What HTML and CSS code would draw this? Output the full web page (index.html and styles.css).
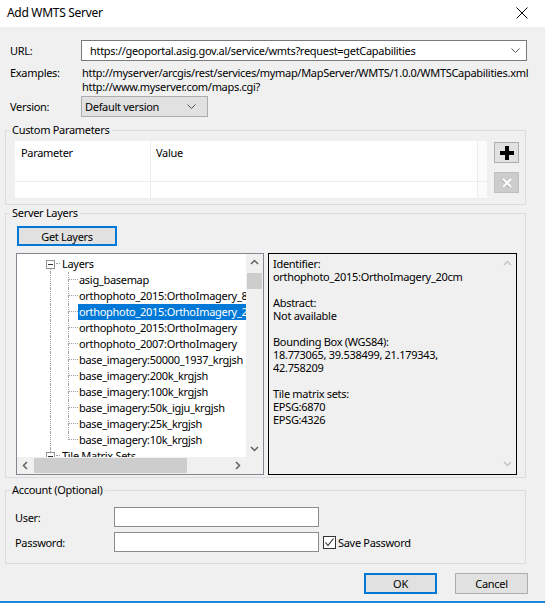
FILE: index.html
```html
<!DOCTYPE html>
<html>
<head>
<meta charset="utf-8">
<title>Add WMTS Server</title>
<link rel="stylesheet" href="styles.css">
</head>
<body>
<div class="window">
  <div class="titlebar">
    <span class="title">Add WMTS Server</span>
    <svg class="close" width="12" height="12" viewBox="0 0 12 12"><path d="M0.5 0.5L11.5 11.5M11.5 0.5L0.5 11.5" stroke="#000" stroke-width="1" fill="none"/></svg>
  </div>
  <div class="main">
    <div class="row url-row">
      <span class="lbl">URL:</span>
      <div class="combo url-combo">
        <span class="combo-text">https://geoportal.asig.gov.al/service/wmts?request=getCapabilities</span>
        <svg class="chev" width="9" height="5" viewBox="0 0 9 5"><path d="M0.5 0.5L4.5 4.5L8.5 0.5" stroke="#555" fill="none"/></svg>
      </div>
    </div>
    <div class="row ex-row">
      <span class="lbl">Examples:</span>
      <div class="examples">
        <div>http://myserver/arcgis/rest/services/mymap/MapServer/WMTS/1.0.0/WMTSCapabilities.xml</div>
        <div>http://www.myserver.com/maps.cgi?</div>
      </div>
    </div>
    <div class="row ver-row">
      <span class="lbl">Version:</span>
      <div class="combo ver-combo">
        <span class="combo-text">Default version</span>
        <svg class="chev" width="9" height="5" viewBox="0 0 9 5"><path d="M0.5 0.5L4.5 4.5L8.5 0.5" stroke="#555" fill="none"/></svg>
      </div>
    </div>

    <fieldset class="group params">
      <legend>Custom Parameters</legend>
      <div class="params-body">
        <div class="grid">
          <div class="gcell hdr c1">Parameter</div>
          <div class="gcell hdr c2">Value</div>
          <div class="gcell hdr c3"></div>
          <div class="gcell c1"></div>
          <div class="gcell c2"></div>
          <div class="gcell c3"></div>
        </div>
        <div class="side-btns">
          <div class="sqbtn add">
            <svg width="14" height="14" viewBox="0 0 14 14"><rect x="5" y="0" width="4" height="14" fill="#000"/><rect x="0" y="5" width="14" height="4" fill="#000"/></svg>
          </div>
          <div class="sqbtn del">
            <svg width="12" height="12" viewBox="0 0 12 12"><path d="M2 3L9 10M9 3L2 10" stroke="#9a9a9a" stroke-width="2.2" fill="none"/><path d="M2 2L10 10M10 2L2 10" stroke="#fff" stroke-width="2" fill="none"/></svg>
          </div>
        </div>
      </div>
    </fieldset>

    <fieldset class="group layers">
      <legend>Server Layers</legend>
      <div class="layers-inner">
        <div class="btn default get-layers">Get Layers</div>
        <div class="layers-body">
          <div class="tree">
            <div class="tree-content">
              <div class="trow">
                <div class="exp"><i class="ln top none"></i><span class="box"><i class="minus"></i></span><i class="ln tail"></i></div>
                <i class="hstub"></i>
                <span class="tlabel">Layers</span>
              </div>
              <div class="trow"><i class="anc"></i><i class="conn"><b></b><b></b></i><span class="tlabel">asig_basemap</span></div>
              <div class="trow"><i class="anc"></i><i class="conn"><b></b><b></b></i><span class="tlabel">orthophoto_2015:OrthoImagery_8cm</span></div>
              <div class="trow sel"><i class="anc"></i><i class="conn"><b></b><b></b></i><span class="tlabel">orthophoto_2015:OrthoImagery_20cm</span></div>
              <div class="trow"><i class="anc"></i><i class="conn"><b></b><b></b></i><span class="tlabel">orthophoto_2015:OrthoImagery</span></div>
              <div class="trow"><i class="anc"></i><i class="conn"><b></b><b></b></i><span class="tlabel">orthophoto_2007:OrthoImagery</span></div>
              <div class="trow"><i class="anc"></i><i class="conn"><b></b><b></b></i><span class="tlabel">base_imagery:50000_1937_krgjsh</span></div>
              <div class="trow"><i class="anc"></i><i class="conn"><b></b><b></b></i><span class="tlabel">base_imagery:200k_krgjsh</span></div>
              <div class="trow"><i class="anc"></i><i class="conn"><b></b><b></b></i><span class="tlabel">base_imagery:100k_krgjsh</span></div>
              <div class="trow"><i class="anc"></i><i class="conn"><b></b><b></b></i><span class="tlabel">base_imagery:50k_igju_krgjsh</span></div>
              <div class="trow"><i class="anc"></i><i class="conn"><b></b><b></b></i><span class="tlabel">base_imagery:25k_krgjsh</span></div>
              <div class="trow last"><i class="anc"></i><i class="conn"><b></b><b></b></i><span class="tlabel">base_imagery:10k_krgjsh</span></div>
              <div class="trow">
                <div class="exp"><i class="ln top"></i><span class="box"><i class="minus"></i></span><i class="ln tail none"></i></div>
                <i class="hstub"></i>
                <span class="tlabel">Tile Matrix Sets</span>
              </div>
            </div>
            <div class="vscroll">
              <svg class="arrow" width="17" height="17" viewBox="0 0 17 17"><path d="M5 10L8.5 6.5L12 10" stroke="#606060" stroke-width="1.5" fill="none"/></svg>
              <div class="vtrack"><div class="vthumb"></div></div>
              <svg class="arrow" width="17" height="17" viewBox="0 0 17 17"><path d="M5 7L8.5 10.5L12 7" stroke="#606060" stroke-width="1.5" fill="none"/></svg>
            </div>
            <div class="hscroll">
              <svg class="arrow" width="17" height="17" viewBox="0 0 17 17"><path d="M10 5L6.5 8.5L10 12" stroke="#606060" stroke-width="1.5" fill="none"/></svg>
              <div class="htrack"><div class="hthumb"></div></div>
              <svg class="arrow" width="17" height="17" viewBox="0 0 17 17"><path d="M7 5L10.5 8.5L7 12" stroke="#606060" stroke-width="1.5" fill="none"/></svg>
            </div>
            <div class="corner"></div>
          </div>
          <div class="details">
            <div class="details-text">
              <div>Identifier:</div>
              <div>orthophoto_2015:OrthoImagery_20cm</div>
              <div class="blank"></div>
              <div>Abstract:</div>
              <div>Not available</div>
              <div class="blank"></div>
              <div>Bounding Box (WGS84):</div>
              <div>18.773065, 39.538499, 21.179343,</div>
              <div>42.758209</div>
              <div class="blank"></div>
              <div>Tile matrix sets:</div>
              <div>EPSG:6870</div>
              <div>EPSG:4326</div>
            </div>
            <div class="dscroll">
              <svg class="arrow" width="17" height="17" viewBox="0 0 17 17"><path d="M5 10L8.5 6.5L12 10" stroke="#c4c4c4" stroke-width="1.5" fill="none"/></svg>
              <svg class="arrow" width="17" height="17" viewBox="0 0 17 17"><path d="M5 7L8.5 10.5L12 7" stroke="#c4c4c4" stroke-width="1.5" fill="none"/></svg>
            </div>
          </div>
        </div>
      </div>
    </fieldset>

    <fieldset class="group account">
      <legend>Account (Optional)</legend>
      <div class="acct-grid">
        <span class="albl">User:</span>
        <div class="field"></div>
        <span></span>
        <span class="albl">Password:</span>
        <div class="field"></div>
        <div class="chk-wrap">
          <span class="chk"><svg width="11" height="11" viewBox="0 0 11 11"><path d="M1.5 5.5L4 8.5L9.5 1.5" stroke="#222" stroke-width="1.1" fill="none"/></svg></span>
          <span>Save Password</span>
        </div>
      </div>
    </fieldset>

    <div class="footer">
      <div class="btn default dlg">OK</div>
      <div class="btn dlg">Cancel</div>
    </div>
  </div>
</div>
</body>
</html>
```

FILE: styles.css
```css
* { box-sizing: border-box; }
html, body { margin: 0; padding: 0; }
body {
  font-family: "Noto Sans", "Open Sans", sans-serif;
  font-size: 11px;
  letter-spacing: -0.3px;
  color: #000;
  background: #fff;
}
.window {
  width: 545px;
  height: 603px;
  background: #f0f0f0;
  border-bottom: 2px solid #1d86d6;
  display: flex;
  flex-direction: column;
  overflow: hidden;
}
.titlebar {
  height: 27px;
  flex: none;
  background: #fff;
  display: flex;
  align-items: center;
  justify-content: space-between;
  padding: 0 17px 2px 7px;
  font-size: 12px;
}
.close { display: block; }
.main {
  flex: 1;
  display: flex;
  flex-direction: column;
  padding: 0 18px 0 5px;
}
.row { display: flex; }
.lbl { width: 76px; padding-left: 5px; flex: none; }
.url-row { margin-top: 13px; height: 21px; align-items: center; }
.combo {
  display: flex;
  align-items: center;
  justify-content: space-between;
  height: 21px;
}
.url-combo {
  width: 446px;
  background: #fff;
  border: 1px solid #7a7a7a;
  padding: 0 6px 0 8px;
}
.ex-row { margin-top: 5px; line-height: 14px; }
.examples { padding-left: 1px; }
.ver-row { margin-top: 2px; height: 21px; align-items: center; }
.ver-combo {
  width: 127px;
  background: #e1e1e1;
  border: 1px solid #adadad;
  padding: 0 11px 0 3px;
}

.group {
  margin: 0;
  padding: 0;
  border: 1px solid #dcdcdc;
  min-width: 0;
  width: 521px;
}
.group legend {
  padding: 0 2px;
  margin-left: 4px;
  line-height: 14px;
}
.params { margin-top: 6px; height: 82px; }
.params-body {
  display: flex;
  padding: 4px 0 0 9px;
}
.grid {
  width: 472px;
  height: 58px;
  background: #fff;
  display: grid;
  grid-template-columns: 136px 327px 9px;
  grid-template-rows: 41px 17px;
}
.gcell { border-right: 1px solid #ececec; border-bottom: 1px solid #ececec; }
.gcell.c3 { border-right: none; background: #fbfbfb; }
.gcell.hdr { padding: 5px 0 0 6px; line-height: 14px; }
.gcell.c2.hdr { padding-left: 5px; }
.side-btns {
  margin-left: 7px;
  display: flex;
  flex-direction: column;
  gap: 9px;
  padding-top: 1px;
}
.sqbtn {
  width: 25px;
  height: 21px;
  display: flex;
  align-items: center;
  justify-content: center;
}
.sqbtn.add { background: #e1e1e1; border: 1px solid #adadad; }
.sqbtn.del { background: #cccccc; border: 1px solid #bfbfbf; }

.btn {
  display: flex;
  align-items: center;
  justify-content: center;
  background: #e1e1e1;
  border: 1px solid #adadad;
}
.btn.default { border: 2px solid #0078d7; }

.layers { margin-top: 1px; height: 272px; }
.layers-inner { padding-left: 10px; }
.get-layers { width: 100px; height: 20px; margin-top: 6px; margin-left: 1px; }
.layers-body {
  display: flex;
  gap: 4px;
  margin-top: 7px;
}
.tree {
  width: 248px;
  height: 222px;
  border: 1px solid #828790;
  background: #fff;
  display: grid;
  grid-template-columns: 229px 17px;
  grid-template-rows: 203px 17px;
}
.tree-content {
  overflow: hidden;
  padding-top: 2px;
}
.trow {
  height: 16px;
  display: flex;
  align-items: stretch;
  white-space: nowrap;
  line-height: 16px;
}
.anc {
  flex: none;
  width: 18px;
  margin-left: 33px;
  border-left: 1px dotted #a0a0a0;
}
.conn {
  flex: none;
  width: 10px;
  display: flex;
  flex-direction: column;
}
.conn b { display: block; border-left: 1px dotted #a0a0a0; }
.conn b:first-child { height: 8px; border-bottom: 1px dotted #a0a0a0; }
.conn b:last-child { flex: 1; }
.trow.last .conn b:last-child { border-left: none; }
.tlabel { padding: 0 2px 0 1px; flex: none; }
.trow.sel .tlabel { background: #0078d7; color: #fff; }
.exp {
  flex: none;
  width: 9px;
  margin-left: 29px;
  display: flex;
  flex-direction: column;
  align-items: center;
}
.exp .ln { width: 1px; flex: 1; border-left: 1px dotted #a0a0a0; }
.exp .ln.top { flex: none; height: 4px; }
.exp .ln.none { border-left: none; }
.box {
  flex: none;
  width: 9px;
  height: 9px;
  border: 1px solid #919191;
  background: #fff;
  display: flex;
  align-items: center;
  justify-content: center;
}
.minus { width: 5px; height: 1px; background: #333; }
.hstub {
  flex: none;
  width: 4px;
  margin: 0 1px 0 1px;
  height: 8px;
  border-bottom: 1px dotted #a0a0a0;
}
.vscroll {
  grid-row: 1;
  grid-column: 2;
  background: #f0f0f0;
  display: flex;
  flex-direction: column;
}
.arrow { display: block; flex: none; }
.vtrack { flex: 1; padding: 2px 1px; }
.vthumb { height: 16px; background: #cdcdcd; }
.hscroll {
  grid-row: 2;
  grid-column: 1;
  background: #f0f0f0;
  display: flex;
}
.htrack { flex: 1; padding: 1px 0; }
.hthumb { width: 153px; height: 100%; background: #cdcdcd; }
.corner { background: #f0f0f0; }

.details {
  width: 249px;
  height: 222px;
  border: 1px solid #000;
  display: flex;
}
.details-text {
  flex: 1;
  padding: 3px 0 0 4px;
  line-height: 13px;
}
.blank { height: 13px; }
.dscroll {
  width: 17px;
  display: flex;
  flex-direction: column;
  justify-content: space-between;
  padding: 1px 0 2px;
}

.account { margin-top: 5px; height: 81px; }
.acct-grid {
  display: grid;
  grid-template-columns: 99px 205px auto;
  grid-template-rows: 20px 20px;
  row-gap: 5px;
  align-items: center;
  padding: 10px 0 0 9px;
}
.field { height: 20px; background: #fff; border: 1px solid #8c8c8c; }
.chk-wrap { display: flex; align-items: center; gap: 2px; padding-left: 4px; }
.chk {
  width: 13px;
  height: 13px;
  border: 1px solid #333;
  background: #fff;
  display: flex;
  align-items: center;
  justify-content: center;
}
.footer {
  display: flex;
  justify-content: flex-end;
  gap: 18px;
  margin-top: 9px;
  margin-right: -19px;
  padding-right: 18px;
}
.btn.dlg { width: 73px; height: 21px; }
```
